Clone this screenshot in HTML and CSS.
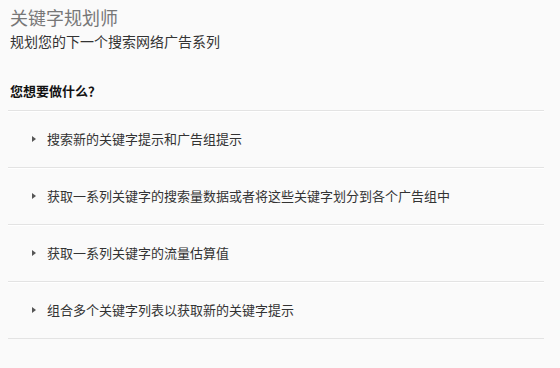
FILE: index.html
```html
<!DOCTYPE html>
<html lang="zh-CN">
<head>
<meta charset="utf-8">
<link rel="stylesheet" href="styles.css">
</head>
<body>
<div class="page">
  <h1 class="title">关键字规划师</h1>
  <p class="subtitle">规划您的下一个搜索网络广告系列</p>
  <h2 class="question">您想要做什么？</h2>
  <ul class="options">
    <li class="option"><span class="arrow"></span><span class="label">搜索新的关键字提示和广告组提示</span></li>
    <li class="option"><span class="arrow"></span><span class="label">获取一系列关键字的搜索量数据或者将这些关键字划分到各个广告组中</span></li>
    <li class="option"><span class="arrow"></span><span class="label">获取一系列关键字的流量估算值</span></li>
    <li class="option"><span class="arrow"></span><span class="label">组合多个关键字列表以获取新的关键字提示</span></li>
  </ul>
</div>
</body>
</html>
```
FILE: styles.css
```css
html, body {
  margin: 0;
  padding: 0;
  background: #fafafa;
}
body {
  font-family: "Noto Sans CJK SC", "Noto Sans", sans-serif;
  color: #222;
}
.page {
  padding: 7px 16px 0 8px;
}
.title {
  margin: 0 0 0 2px;
  font-size: 18px;
  line-height: 20px;
  font-weight: normal;
  color: #777;
}
.subtitle {
  margin: 4px 0 0 2px;
  font-size: 14px;
  line-height: 20px;
  color: #333;
}
.question {
  margin: 30px 0 0 2px;
  font-size: 13px;
  line-height: 20px;
  font-weight: bold;
  color: #111;
}
.options {
  list-style: none;
  margin: 9px 0 0 0;
  padding: 0;
  border-bottom: 1px solid #e3e3e3;
}
.option {
  display: flex;
  align-items: center;
  height: 54px;
  border-top: 1px solid #e3e3e3;
  box-shadow: inset 0 1px 0 #ffffff;
  padding-top: 1px;
  padding-bottom: 1px;
}
.arrow {
  width: 0;
  height: 0;
  margin-left: 24px;
  border-top: 3px solid transparent;
  border-bottom: 3px solid transparent;
  border-left: 4px solid #555;
}
.label {
  margin-left: 11px;
  font-size: 13px;
  line-height: 20px;
  color: #333;
}
```
